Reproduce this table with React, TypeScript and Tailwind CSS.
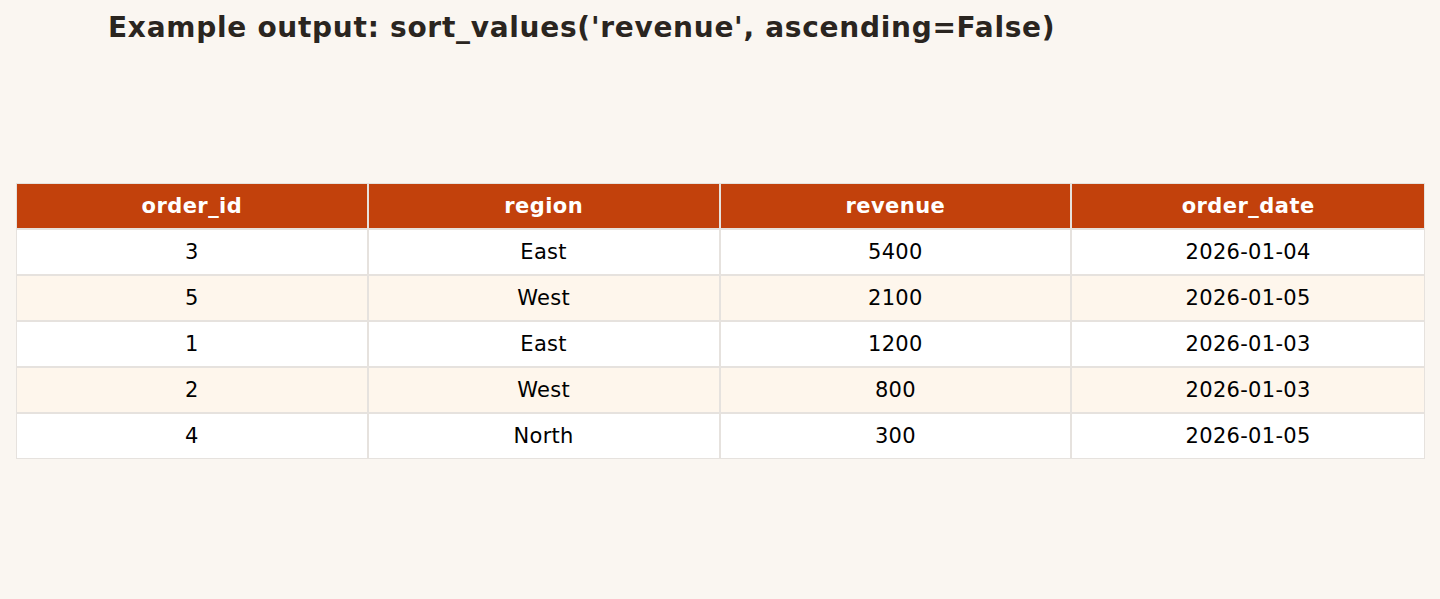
import React from "react";

const rows = [
  ["3", "East", "5400", "2026-01-04"],
  ["5", "West", "2100", "2026-01-05"],
  ["1", "East", "1200", "2026-01-03"],
  ["2", "West", "800", "2026-01-03"],
  ["4", "North", "300", "2026-01-05"],
];
const headers = ["order_id", "region", "revenue", "order_date"];

export default function App() {
  return (
    <div
      className="w-[1440px] h-[599px] bg-[#faf6f1] overflow-hidden"
      style={{ fontFamily: '"DejaVu Sans", sans-serif' }}
    >
      <div className="pl-[108px] pt-[10px] h-[183px]">
        <h1 className="text-[28px] leading-[36px] font-bold tracking-[0.72px] text-[#2a2520]">
          Example output: sort_values('revenue', ascending=False)
        </h1>
      </div>
      <div className="ml-[16px] w-[1409px] border-[1.5px] border-[#e6e2de]">
        <div className="grid grid-cols-4 bg-[#c2410c]">
          {headers.map((h, i) => (
            <div
              key={h}
              className={`h-[44px] pt-[1px] flex items-center justify-center text-white font-bold text-[21px] tracking-[0.45px] ${i < 3 ? "border-r-2 border-[#e6e2de]" : ""}`}
            >
              {h}
            </div>
          ))}
        </div>
        {rows.map((r, ri) => (
          <div
            key={ri}
            className={`grid grid-cols-4 border-t-2 border-[#e6e2de] ${ri % 2 === 1 ? "bg-[#fef6ec]" : "bg-white"}`}
          >
            {r.map((c, i) => (
              <div
                key={i}
                className={`h-[44px] pt-[1px] flex items-center justify-center text-black text-[21px] tracking-[0.3px] ${i < 3 ? "border-r-2 border-[#e6e2de]" : ""}`}
              >
                {c}
              </div>
            ))}
          </div>
        ))}
      </div>
    </div>
  );
}
